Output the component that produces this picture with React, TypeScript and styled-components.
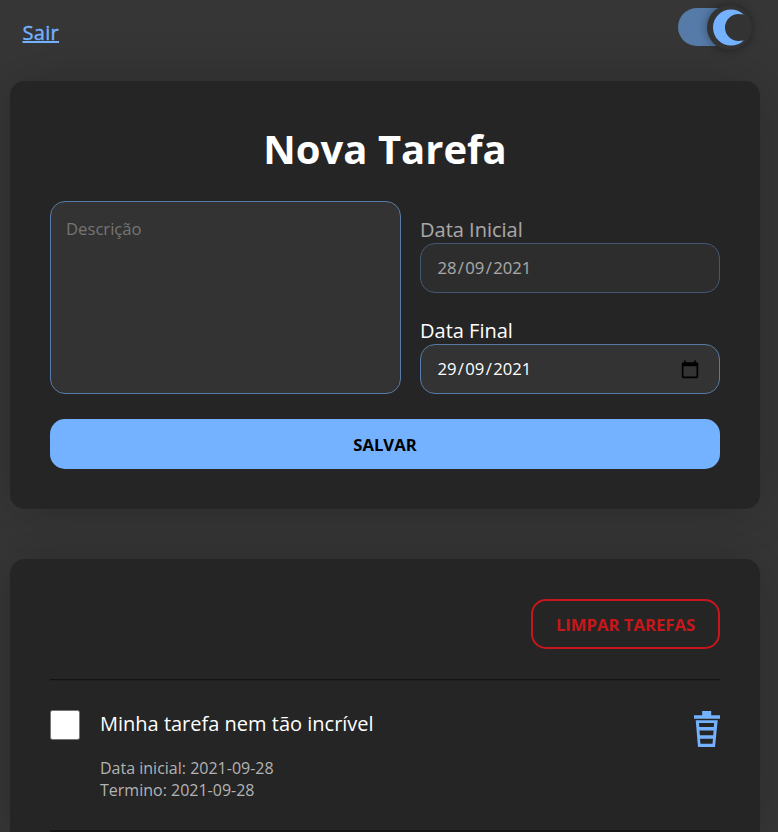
import React from "react";
import styled, { createGlobalStyle } from "styled-components";

const GlobalStyle = createGlobalStyle`
  * { box-sizing: border-box; margin: 0; padding: 0; }
  html, body { background: #363636; }
  body {
    height: 832px;
    overflow: hidden;
    color: #fff;
    font-family: "Open Sans", sans-serif;
    font-size: 16px;
  }
  button, textarea { font: inherit; }
`;

const Page = styled.div`
  width: 770px;
  height: 832px;
  padding-left: 10px;
  padding-right: 10px;
`;

const Header = styled.header`
  display: flex;
  justify-content: space-between;
  height: 81px;
  padding: 8px 8px 0 12.5px;
`;

const Logout = styled.a`
  margin-top: 11px;
  height: 27px;
  color: #74b1ff;
  font-size: 20px;
  line-height: 27px;
  letter-spacing: 0.3px;
  -webkit-text-stroke: 0.4px #74b1ff;
  text-decoration: underline;
`;

const Switch = styled.button`
  display: flex;
  align-items: center;
  justify-content: flex-end;
  width: 74px;
  height: 38px;
  border: 0;
  border-radius: 19px;
  background: linear-gradient(90deg, #567ba8 55px, transparent 55px);
`;

const Thumb = styled.span`
  display: flex;
  flex: none;
  width: 45px;
  height: 45px;
  border-radius: 50%;
  background: #333;
  box-shadow: 0 0 10px rgba(0, 0, 0, 0.4);
`;

const Card = styled.section`
  width: 750px;
  padding: 40px;
  border-radius: 15px;
  background: #252525;
  box-shadow: 0 0 50px rgba(0, 0, 0, 0.2);
`;

const TaskCard = styled(Card)`
  margin-top: 50px;
  height: 273px;
  padding-bottom: 0;
  border-radius: 15px 15px 0 0;
`;

const Title = styled.h1`
  height: 55px;
  margin-bottom: 25px;
  padding-top: 1px;
  font-size: 40px;
  line-height: 54px;
  font-weight: 700;
  text-align: center;
`;

const Fields = styled.div`
  display: grid;
  grid-template-columns: 351px 300px;
  column-gap: 19px;
  height: 193px;
`;

const Description = styled.textarea`
  height: 193px;
  padding: 16px 15px;
  border: 1px solid #567ba8;
  border-radius: 15px;
  background: #333;
  color: #fff;
  font-size: 16.667px;
  line-height: 22px;
  resize: none;
  outline: none;
  &::placeholder { color: #757575; opacity: 1; }
`;

const Dates = styled.div`
  display: flex;
  flex-direction: column;
  justify-content: space-between;
  padding-top: 15px;
`;

const DateGroup = styled.div<{ $disabled?: boolean }>`
  opacity: ${(p) => (p.$disabled ? 0.6 : 1)};
`;

const Label = styled.div`
  height: 27px;
  font-size: 20px;
  line-height: 27px;
`;

const DateField = styled.div`
  display: flex;
  align-items: center;
  height: 50px;
  padding: 0 20px 0 15px;
  border: 1px solid #567ba8;
  border-radius: 15px;
  background: #333;
  font-size: 16.667px;
  line-height: 22px;
  svg { margin-left: auto; }
`;

const DatePart = styled.span`
  padding: 0 1.4px;
`;

const SaveButton = styled.button`
  display: block;
  width: 100%;
  height: 50px;
  margin-top: 25px;
  border: 0;
  border-radius: 15px;
  background: #74b1ff;
  color: #000;
  font-size: 16.667px;
  font-weight: 700;
  line-height: 22px;
  padding-top: 2px;
`;

const ListActions = styled.div`
  display: flex;
  justify-content: flex-end;
  padding-bottom: 30px;
`;

const ClearButton = styled.button`
  width: 189px;
  height: 50px;
  padding-top: 2px;
  border: 2px solid #c8171a;
  border-radius: 15px;
  background: transparent;
  color: #c8171a;
  font-size: 16.667px;
  font-weight: 700;
  line-height: 22px;
`;

const Task = styled.article`
  display: flex;
  height: 151px;
  padding-top: 30px;
  border-top: 1px solid #131313;
  box-shadow: 0 1px 0 #202020 inset;
`;

const NextTaskDivider = styled.hr`
  height: 2px;
  border: 0;
  background: #151515;
`;

const Checkbox = styled.input`
  appearance: none;
  flex: none;
  width: 30px;
  height: 30px;
  margin-right: 20px;
  border: 1px solid #767676;
  border-radius: 2.5px;
  background: #fff;
`;

const TaskText = styled.div`
  flex: 1;
`;

const TaskName = styled.h2`
  height: 27px;
  margin-bottom: 20px;
  font-size: 20px;
  line-height: 27px;
  font-weight: 400;
`;

const TaskDate = styled.p`
  height: 22px;
  line-height: 22px;
  color: #b3b3b3;
`;

const DeleteButton = styled.button`
  width: 26px;
  height: 37px;
  margin-top: 1px;
  border: 0;
  background: transparent;
  svg { display: block; }
`;

function Moon() {
  return (
    <svg width="45" height="45" viewBox="0 0 45 45" aria-hidden="true">
      <path
        fill="#74b1ff"
        d="M36.8 9.6L31.5 9A13.500 13.500 0 0 0 31.500 36L36.800 35.400A18.100 18.100 0 1 1 36.800 9.600Z"
      />
    </svg>
  );
}

function CalendarIcon() {
  return (
    <svg width="18" height="19" viewBox="0 0 18 19" aria-hidden="true">
      <path
        fill="#000"
        fillRule="evenodd"
        d="M3 .5h1.7v1.7h8.6V.5H15v1.7h.6A1.6 1.6 0 0 1 17.2 3.8v12.8a1.6 1.6 0 0 1-1.6 1.6H2.4a1.6 1.6 0 0 1-1.6-1.6V3.8a1.6 1.6 0 0 1 1.6-1.6H3zM2.5 6.2v10.3h13V6.2z"
      />
    </svg>
  );
}

function TrashIcon() {
  return (
    <svg width="26" height="37" viewBox="0 0 26 37" aria-hidden="true">
      <path fill="#74b1ff" d="M8.2 0h9v4.3H26v3.5H0V4.3h8.2z" />
      <path
        fill="#74b1ff"
        fillRule="evenodd"
        d="M1.7 9.2h22L21 36H4zM5 12l.3 4H19.800l.3-4zM5.500 19.500l.4 4.700H19.200l.4-4.700zM6 27.700l.5 5H18.500l.5-5z"
      />
    </svg>
  );
}

function DateValue({ value }: { value: string }) {
  const [day, month, year] = value.split("/");
  return (
    <>
      <DatePart>{day}</DatePart>/<DatePart>{month}</DatePart>/
      <DatePart>{year}</DatePart>
    </>
  );
}

export default function App() {
  return (
    <>
      <GlobalStyle />
      <Page>
        <Header>
          <Logout>Sair</Logout>
          <Switch aria-label="Tema escuro">
            <Thumb>
              <Moon />
            </Thumb>
          </Switch>
        </Header>
        <Card>
          <Title>Nova Tarefa</Title>
          <Fields>
            <Description placeholder="Descrição" />
            <Dates>
              <DateGroup $disabled>
                <Label>Data Inicial</Label>
                <DateField>
                  <DateValue value="28/09/2021" />
                </DateField>
              </DateGroup>
              <DateGroup>
                <Label>Data Final</Label>
                <DateField>
                  <DateValue value="29/09/2021" />
                  <CalendarIcon />
                </DateField>
              </DateGroup>
            </Dates>
          </Fields>
          <SaveButton>SALVAR</SaveButton>
        </Card>
        <TaskCard>
          <ListActions>
            <ClearButton>LIMPAR TAREFAS</ClearButton>
          </ListActions>
          <Task>
            <Checkbox type="checkbox" aria-label="Concluir tarefa" />
            <TaskText>
              <TaskName>Minha tarefa nem tão incrível</TaskName>
              <TaskDate>Data inicial: 2021-09-28</TaskDate>
              <TaskDate>Termino: 2021-09-28</TaskDate>
            </TaskText>
            <DeleteButton aria-label="Excluir tarefa">
              <TrashIcon />
            </DeleteButton>
          </Task>
          <NextTaskDivider />
        </TaskCard>
      </Page>
    </>
  );
}
